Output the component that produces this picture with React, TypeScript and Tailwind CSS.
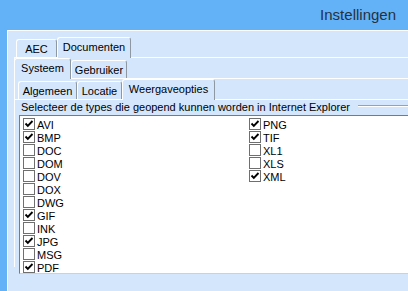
import React from "react";

type TabProps = { label: string; w: string; selected?: boolean };

function Tab({ label, w, selected }: TabProps) {
  return (
    <div
      className={
        selected
          ? `${w} relative z-10 -mb-px h-[21px] flex justify-center pt-[3px] bg-[#d4e6fc] border-l border-t border-r border-l-white border-t-white border-r-[#8d98a2] rounded-t-[3px] leading-[13px]`
          : `${w} relative h-[18px] flex justify-center pt-[3px] border-l border-t border-r border-l-white border-t-white border-r-[#8d98a2] rounded-t-[3px] leading-[13px]`
      }
    >
      {label}
    </div>
  );
}

function Check({ label, checked }: { label: string; checked?: boolean }) {
  return (
    <div className="h-[13px] flex items-start gap-[2px]">
      <div className="w-[12px] h-[12px] border border-[#6f6f6f] bg-white flex items-center justify-center shrink-0">
        {checked && (
          <svg width="10" height="10" viewBox="0 0 10 10">
            <path d="M1.5 4.5 L3.8 6.8 L8.5 2" fill="none" stroke="#000" strokeWidth="1.9" />
          </svg>
        )}
      </div>
      <span className="leading-[12px] pt-px">{label}</span>
    </div>
  );
}

const col1: [string, boolean][] = [
  ["AVI", true],
  ["BMP", true],
  ["DOC", false],
  ["DOM", false],
  ["DOV", false],
  ["DOX", false],
  ["DWG", false],
  ["GIF", true],
  ["INK", false],
  ["JPG", true],
  ["MSG", false],
  ["PDF", true],
];
const col2: [string, boolean][] = [
  ["PNG", true],
  ["TIF", true],
  ["XL1", false],
  ["XLS", false],
  ["XML", true],
];

export default function App() {
  return (
    <div
      className="w-[408px] h-[291px] overflow-hidden bg-[#63b2f8] text-[11px] text-black"
      style={{ fontFamily: '"Liberation Sans", Arial, sans-serif' }}
    >
      <div className="h-[30px] flex items-center justify-end pr-[12px]">
        <span className="text-[15px] text-[#26313d] leading-[20px]">Instellingen</span>
      </div>
      <div className="ml-[7px] h-[261px] bg-[#d4e6fc] border-l border-t border-white">
        {/* Row 1 tabs */}
        <div className="mt-[6px] h-[20px] flex items-end pl-[8px]">
          <Tab label="AEC" w="w-[41px]" />
          <Tab label="Documenten" w="w-[74px]" selected />
        </div>
        {/* Pane 1 */}
        <div className="ml-[6px] border-l border-t border-white h-[210px]">
          <div className="pt-px h-[20px] flex items-end -ml-px">
            <Tab label="Systeem" w="w-[57px]" selected />
            <Tab label="Gebruiker" w="w-[56px]" />
          </div>
          {/* Pane 2 */}
          <div className="border-t border-white">
            <div className="h-[20px] flex items-end ml-[3px]">
              <Tab label="Algemeen" w="w-[59px]" />
              <Tab label="Locatie" w="w-[45px]" />
              <Tab label="Weergaveopties" w="w-[93px]" selected />
            </div>
            {/* Pane 3 */}
            <div className="border-t border-white">
              <div className="h-[15px] flex items-start pl-[6px]">
                <span className="leading-[13px] pt-px whitespace-nowrap">
                  Selecteer de types die geopend kunnen worden in Internet Explorer
                </span>
                <div className="flex-1 ml-[8px] mt-[5px] h-[2px] border-t border-[#a0a0a0] border-b border-b-white" />
              </div>
              <div className="ml-[4px] h-[159px] bg-white border-l border-t border-[#7a7a7a] border-b border-b-[#d0d0d0] pt-[2px] pl-[3px] flex">
                <div className="w-[226px] flex flex-col">
                  {col1.map(([l, c]) => (
                    <Check key={l} label={l} checked={c} />
                  ))}
                </div>
                <div className="flex flex-col">
                  {col2.map(([l, c]) => (
                    <Check key={l} label={l} checked={c} />
                  ))}
                </div>
              </div>
            </div>
          </div>
        </div>
      </div>
    </div>
  );
}
